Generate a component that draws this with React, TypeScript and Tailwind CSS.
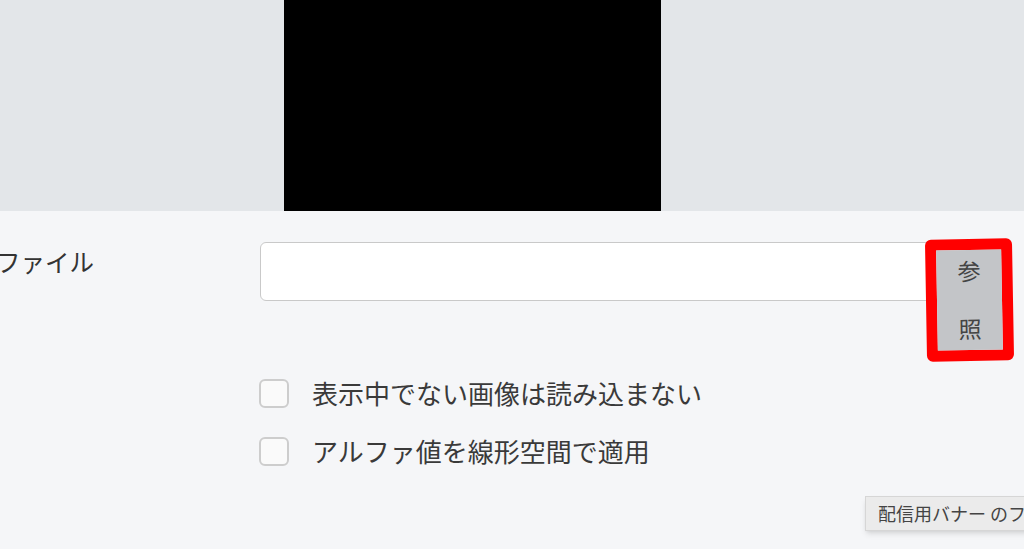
export default function App() {
  const font = { fontFamily: '"Noto Sans CJK JP", "Noto Sans", sans-serif' };

  return (
    <main className="relative flex h-[549px] w-[1024px] flex-col overflow-hidden bg-[#f5f6f8]" style={font}>
      {/* preview */}
      <div className="flex h-[211px] shrink-0 bg-[#e3e6e9]">
        <div className="ml-[284px] h-full w-[377px] bg-black"></div>
      </div>

      {/* file row */}
      <div className="mt-[28px] flex items-start">
        <div className="-ml-[4px] mt-[5px] w-[264px] text-[24.5px] leading-[36px] text-[#333]">ファイル</div>
        <div className="mt-[3px] h-[59px] w-[676px] rounded-[6px] border border-[#c9c9c9] bg-white"></div>
        <div className="relative z-10 -ml-[10px] rotate-[-1deg] rounded-[6px] border-[11px] border-[#ff0000]">
          <button className="flex h-[100px] w-[65px] flex-col items-center gap-[34px] bg-[#c3c5c8] pb-[10px] pt-[8px] text-[23px] leading-[24px] text-[#444]">
            <span>参</span>
            <span>照</span>
          </button>
        </div>
      </div>

      {/* options */}
      <div className="ml-[259px] mt-[14px] flex flex-col gap-[22px]">
        <label className="flex h-[36px] items-center gap-[23px]">
          <span className="h-[29px] w-[30px] rounded-[6px] border-2 border-[#cdcdcd] bg-[#fafafa]"></span>
          <span className="text-[26px] leading-[36px] text-[#3a3a3a]">表示中でない画像は読み込まない</span>
        </label>
        <label className="flex h-[36px] items-center gap-[23px]">
          <span className="h-[29px] w-[30px] rounded-[6px] border-2 border-[#cdcdcd] bg-[#fafafa]"></span>
          <span className="text-[26px] leading-[36px] text-[#3a3a3a]">アルファ値を線形空間で適用</span>
        </label>
      </div>

      {/* tooltip */}
      <div className="absolute left-[865px] top-[496px] flex h-[35px] w-[200px] items-center whitespace-nowrap border border-[#d6d6d6] bg-[#ebebeb] pl-[12px] text-[18px] text-[#444] shadow-md">
        配信用バナー のファイル
      </div>
    </main>
  );
}
